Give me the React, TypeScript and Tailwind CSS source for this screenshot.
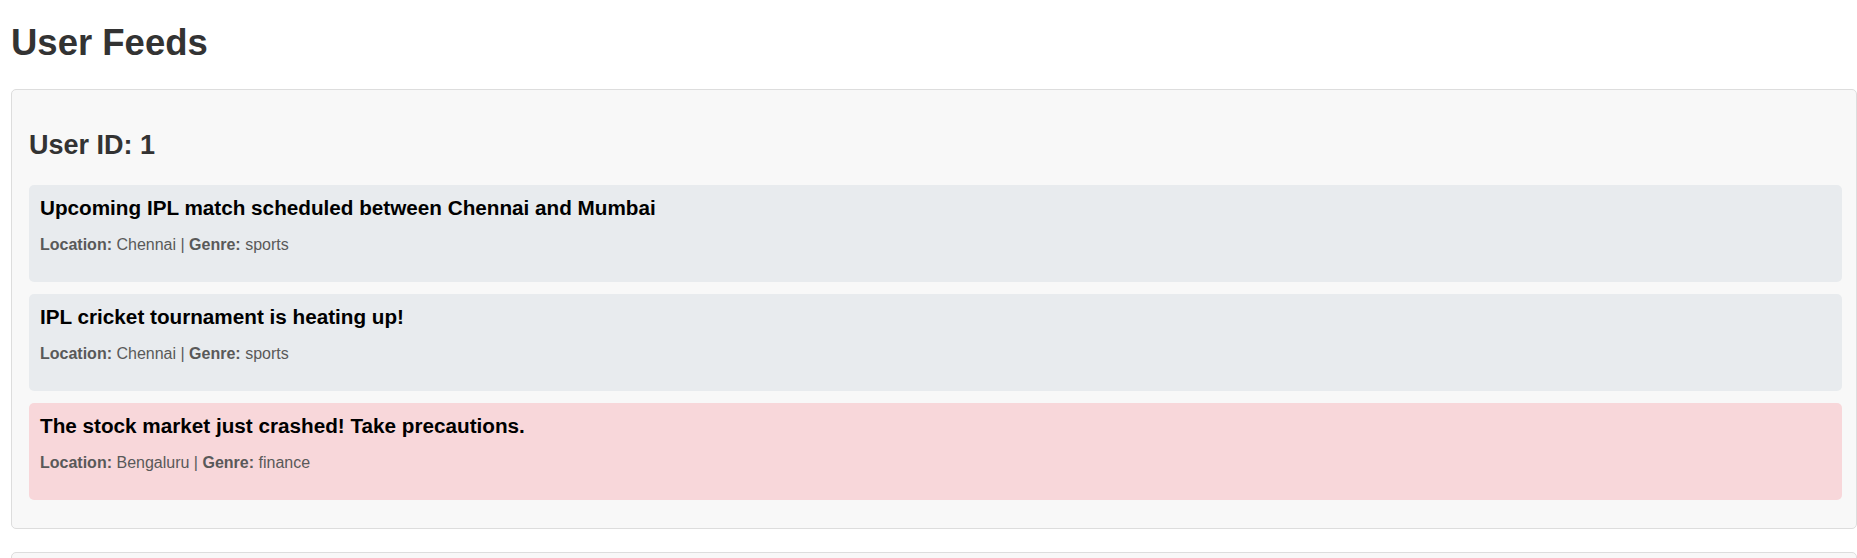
import React from 'react';

type Post = { id: number; text: string; location: string; genre: string; alert?: boolean };

const FEEDS: { userId: number; posts: Post[] }[] = [
  {
    userId: 1,
    posts: [
      { id: 1, text: 'Upcoming IPL match scheduled between Chennai and Mumbai', location: 'Chennai', genre: 'sports' },
      { id: 2, text: 'IPL cricket tournament is heating up!', location: 'Chennai', genre: 'sports' },
      { id: 3, text: 'The stock market just crashed! Take precautions.', location: 'Bengaluru', genre: 'finance', alert: true },
    ],
  },
  { userId: 2, posts: [] },
];

function PostCard({ post }: { post: Post }) {
  return (
    <div className={`rounded-[5px] pl-[11px] pr-3 pt-[11px] pb-[28px] ${post.alert ? 'bg-[#f8d7da]' : 'bg-[#e8ebee]'}`}>
      <h3 className="text-[20.7px] leading-[24px] font-bold text-black">{post.text}</h3>
      <p className="mt-[16px] text-[16px] leading-[18px] text-[#595959]">
        <b>Location:</b> {post.location} | <b>Genre:</b> {post.genre}
      </p>
    </div>
  );
}

export default function App() {
  return (
    <div className="min-h-screen bg-white pt-[24px] font-['Liberation_Sans',Arial,sans-serif]">
      <h1 className="ml-[11px] text-[36.5px] leading-[37px] font-bold text-[#333]">User Feeds</h1>
      <div className="mt-[28px] flex flex-col gap-[23px]">
        {FEEDS.map((feed) => (
          <section
            key={feed.userId}
            className="ml-[11px] rounded-[5px] border border-[#dddddd] bg-[#f8f8f8] pl-[17px] pr-[14px] pt-[41px] pb-[28px]"
          >
            <h2 className="text-[27px] leading-[28px] font-bold text-[#333]">User ID: {feed.userId}</h2>
            <div className="mt-[26px] flex flex-col gap-3">
              {feed.posts.map((p) => <PostCard key={p.id} post={p} />)}
            </div>
          </section>
        ))}
      </div>
    </div>
  );
}
